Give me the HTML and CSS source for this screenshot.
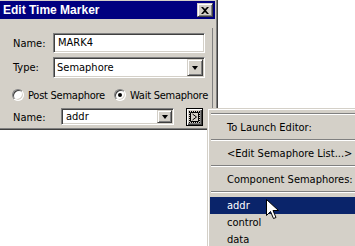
FILE: index.html
```html
<!DOCTYPE html>
<html>
    <head>
        <meta charset=utf-8>
        <title>Edit Time Marker</title>
        <link rel="stylesheet" href="styles.css">
    </head>
    <body>
        <div class="screen">
            <div class="dialog">
                <div class="titlebar">
                    <span class="caption">Edit Time Marker</span>
                    <span class="close">
                        <svg width="8" height="7" viewBox="0 0 8 7"><path d="M0 0h2l2 2 2-2h2L5 3.5 8 7H6L4 5 2 7H0l3-3.5z" fill="#000"/></svg>
                    </span>
                </div>

                <div class="panel">
                    <div class="row">
                        <span class="label">Name:</span>
                        <div class="field text">MARK4</div>
                    </div>
                    <div class="row row-type">
                        <span class="label">Type:</span>
                        <div class="field combo">
                            <span class="value">Semaphore</span>
                            <span class="drop"><i class="arrow"></i></span>
                        </div>
                    </div>
                    <div class="row radios">
                        <span class="option first"><i class="radio"></i>Post Semaphore</span>
                        <span class="option"><i class="radio on"></i>Wait Semaphore</span>
                    </div>
                    <div class="row row-sem">
                        <span class="label label-wide">Name:</span>
                        <div class="field combo short">
                            <span class="value">addr</span>
                            <span class="drop"><i class="arrow"></i></span>
                        </div>
                        <span class="more">
                            <span class="focus">
                                <svg width="9" height="10" viewBox="0 0 9 10"><path d="M0.5 0.5h8v9h-8z M2.5 2l4 3-4 3" fill="none" stroke="#000"/></svg>
                            </span>
                        </span>
                    </div>
                </div>
            </div>

            <div class="menu">
                <div class="sep"></div>
                <div class="item">To Launch Editor:</div>
                <div class="sep"></div>
                <div class="item">&lt;Edit Semaphore List...&gt;</div>
                <div class="sep"></div>
                <div class="item">Component Semaphores:</div>
                <div class="sep"></div>
                <div class="item hot">addr</div>
                <div class="item">control</div>
                <div class="item">data</div>
            </div>

            <svg class="cursor" width="13" height="21" viewBox="0 0 13 21">
                <path d="M0.5 0.5v16l4-4 3 7 2.5-1-3-7h5.5z" fill="#fff" stroke="#000"/>
            </svg>
        </div>
    </body>
</html>
```

FILE: styles.css
```css
html, body {
    margin: 0;
    padding: 0;
    overflow: hidden;
    background: #fff;
}

.screen {
    position: relative;
    width: 355px;
    height: 246px;
    overflow: hidden;
    font: 11px "DejaVu Sans Condensed", "Liberation Sans", sans-serif;
    color: #000;
}

.dialog {
    box-sizing: border-box;
    width: 221px;
    height: 132px;
    margin: -2px 0 0 -3px;
    padding: 2px;
    background: #d4d0c8;
    border: 1px solid;
    border-color: #d4d0c8 #404040 #404040 #d4d0c8;
    box-shadow: inset 1px 1px #fff, inset -1px -1px #808080;
}

.titlebar {
    display: flex;
    align-items: center;
    justify-content: space-between;
    height: 18px;
    padding-left: 3px;
    background: #000080;
}

.caption {
    color: #fff;
    font: bold 12px "Liberation Sans", sans-serif;
}

.close, .drop {
    box-sizing: border-box;
    display: flex;
    align-items: center;
    justify-content: center;
    background: #d4d0c8;
    border: 1px solid;
    border-color: #d4d0c8 #404040 #404040 #d4d0c8;
    box-shadow: inset 1px 1px #fff, inset -1px -1px #808080;
}

.close {
    width: 16px;
    height: 14px;
    margin-right: 2px;
}

.panel {
    box-sizing: border-box;
    width: 213px;
    height: 101px;
    margin-top: 9px;
    padding: 5px 0 0 13px;
    border-right: 1px solid #808080;
}

.row {
    display: flex;
    align-items: center;
    height: 20px;
    white-space: nowrap;
}

.label {
    width: 40px;
}

.label-wide {
    width: 48px;
}

.field {
    box-sizing: border-box;
    flex: none;
    height: 100%;
    background: #fff;
    border: 1px solid;
    border-color: #808080 #fff #fff #808080;
    box-shadow: inset 1px 1px #404040, inset -1px -1px #d4d0c8;
}

.text {
    width: 152px;
    padding-left: 4px;
    line-height: 18px;
}

.combo {
    display: flex;
    align-items: center;
    width: 152px;
    padding: 1px;
}

.combo .value {
    flex: 1;
    padding-left: 2px;
}

.combo .drop {
    width: 16px;
    height: 100%;
}

.row-type {
    height: 21px;
    margin-top: 4px;
}

.arrow {
    width: 0;
    height: 0;
    border-top: 4px solid #000;
    border-left: 3.5px solid transparent;
    border-right: 3.5px solid transparent;
}

.radios {
    height: 16px;
    margin: 9px 0 0 -1px;
}

.option {
    display: flex;
    align-items: center;
    flex: none;
    gap: 4px;
    letter-spacing: -0.25px;
}

.option.first {
    width: 102px;
}

.radio {
    box-sizing: border-box;
    position: relative;
    flex: none;
    width: 12px;
    height: 12px;
    border-radius: 50%;
    background: #fff;
    border: 1px solid;
    border-color: #808080 #fff #fff #808080;
    box-shadow: inset 1px 1px #404040, inset -1px -1px #d4d0c8;
}

.radio.on::after {
    content: "";
    position: absolute;
    top: 3px;
    left: 3px;
    width: 4px;
    height: 4px;
    border-radius: 50%;
    background: #000;
}

.row-sem {
    height: 18px;
    margin-top: 5px;
    align-items: flex-start;
}

.row-sem .label {
    align-self: center;
}

.short {
    width: 113px;
    height: 17px;
}

.short .value {
    padding-left: 3px;
}

.short .drop {
    width: 15px;
}

.more {
    box-sizing: border-box;
    flex: none;
    width: 17px;
    height: 18px;
    margin-left: 12px;
    padding: 2px;
    background: #d4d0c8;
    border: 1px solid #000;
    box-shadow: inset 1px 1px #fff, inset -1px -1px #404040, inset -2px -2px #808080;
}

.focus {
    box-sizing: border-box;
    display: flex;
    align-items: center;
    justify-content: center;
    height: 100%;
    border: 1px dotted #000;
}

.menu {
    position: absolute;
    left: 207px;
    top: 108px;
    box-sizing: border-box;
    width: 160px;
    height: 150px;
    padding: 1px 0 0 2px;
    background: #d4d0c8;
    border: 1px solid;
    border-color: #d4d0c8 #404040 #404040 #d4d0c8;
    box-shadow: inset 1px 1px #fff, inset -1px -1px #808080;
}

.sep {
    margin: 3px 0 4px 1px;
    border-top: 1px solid #808080;
    border-bottom: 1px solid #fff;
}

.item {
    height: 17px;
    line-height: 17px;
    padding-left: 17px;
    white-space: nowrap;
}

.item.hot {
    background: #0a246a;
    color: #fff;
}

.cursor {
    position: absolute;
    left: 266px;
    top: 199px;
}
```
